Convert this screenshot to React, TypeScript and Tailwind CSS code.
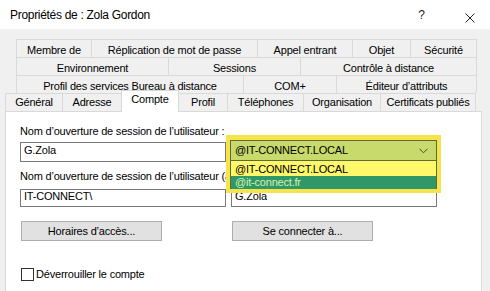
import React from "react";

type T = { label: string; w: string };

const row1: T[] = [
  { label: "Membre de", w: "w-[75px]" },
  { label: "Réplication de mot de passe", w: "w-[166px]" },
  { label: "Appel entrant", w: "w-[95px]" },
  { label: "Objet", w: "w-[58px]" },
  { label: "Sécurité", w: "w-[67px]" },
];
const row2: T[] = [
  { label: "Environnement", w: "w-[152px]" },
  { label: "Sessions", w: "w-[132px]" },
  { label: "Contrôle à distance", w: "w-[177px]" },
];
const row3: T[] = [
  { label: "Profil des services Bureau à distance", w: "w-[227px]" },
  { label: "COM+", w: "w-[93px]" },
  { label: "Éditeur d’attributs", w: "w-[141px]" },
];

function UpperRow({ tabs }: { tabs: T[] }) {
  return (
    <div className="flex pl-[16px]">
      {tabs.map((t, i) => (
        <div
          key={t.label}
          className={`${t.w} h-[18px] border-t border-l border-[#d9d9d9] flex justify-center pt-[4px] leading-[13px] whitespace-nowrap ${
            i === tabs.length - 1 ? "border-r" : ""
          }`}
        >
          {t.label}
        </div>
      ))}
    </div>
  );
}

export default function App() {
  return (
    <div className="w-[490px] h-[291px] overflow-hidden bg-[#f0f0f0] text-[11px] tracking-[-0.2px] text-black font-['Liberation_Sans',Arial,sans-serif]">
      {/* Title bar */}
      <div className="h-[29px] bg-white flex items-start">
        <div className="pl-[10px] pt-[8px] text-[12px] leading-[15px] tracking-[-0.3px]">
          Propriétés de : Zola Gordon
        </div>
        <div className="ml-auto pt-[8px] text-[12px] leading-[15px] w-[7px] text-center text-[#222]">?</div>
        <div className="ml-[40px] mt-[13px] mr-[15px]">
          <svg width="10" height="10" viewBox="0 0 10 10">
            <path d="M0.5 0.5 L9.5 9.5 M9.5 0.5 L0.5 9.5" stroke="#222" strokeWidth="1" fill="none" />
          </svg>
        </div>
      </div>

      {/* Tabs */}
      <div className="pt-[10px]">
        <UpperRow tabs={row1} />
        <UpperRow tabs={row2} />
        <UpperRow tabs={row3} />
        <div className="flex items-end h-[18px] pl-[5px]">
          <div className="w-[57px] h-[18px] border-t border-l border-[#d9d9d9] flex justify-center pt-[2px] leading-[13px]">Général</div>
          <div className="w-[59px] h-[18px] border-t border-l border-[#d9d9d9] flex justify-center pt-[2px] leading-[13px]">Adresse</div>
          <div className="w-[58px] h-[22px] mb-[-1px] relative z-10 bg-white border-t border-x border-[#d9d9d9] flex justify-center pt-[2px] leading-[13px]">Compte</div>
          <div className="w-[48px] h-[18px] border-t border-[#d9d9d9] flex justify-center pt-[2px] leading-[13px]">Profil</div>
          <div className="w-[76px] h-[18px] border-t border-l border-[#d9d9d9] flex justify-center pt-[2px] leading-[13px]">Téléphones</div>
          <div className="w-[77px] h-[18px] border-t border-l border-[#d9d9d9] flex justify-center pt-[2px] leading-[13px]">Organisation</div>
          <div className="w-[96px] h-[18px] border-t border-x border-[#d9d9d9] flex justify-center pt-[2px] leading-[13px] whitespace-nowrap">Certificats publiés</div>
        </div>

        {/* Panel */}
        <div className="ml-[5px] w-[477px] h-[200px] bg-white border border-[#d9d9d9] pt-[13px] pl-[14px]">
          <div className="grid grid-cols-[206px_206px] gap-x-[5px]">
            <div className="col-span-2 leading-[13px] whitespace-nowrap">
              Nom d’ouverture de session de l’utilisateur :
            </div>
            <div className="mt-[4px] h-[20px] border border-[#7a7a7a] pl-[3px] pt-[1px] leading-[13px]">G.Zola</div>
            <div className="mt-[4px] h-[20px] relative z-10">
              {/* opened combo with highlight */}
              <div className="absolute top-[-7px] left-[-5px] w-[215px] bg-[#f6e44a] pt-[5px] pb-[4px] px-[4px]">
                <div className="h-[21px] bg-[#c7da6b] border border-[#5d6b39] flex items-center pl-[4px] pr-[4px] leading-[13px]">
                  <span>@IT-CONNECT.LOCAL</span>
                  <svg className="ml-auto mr-[4px]" width="9" height="6" viewBox="0 0 9 6">
                    <path d="M0.5 0.8 L4.5 4.8 L8.5 0.8" stroke="#3d4a26" strokeWidth="1" fill="none" />
                  </svg>
                </div>
                <div className="border-x border-[#5d6b39]">
                  <div className="h-[15px] bg-[#fff86b] pl-[4px] pt-[2px] leading-[13px]">@IT-CONNECT.LOCAL</div>
                  <div className="h-[13px] bg-[#2f9866] pl-[4px] leading-[13px] text-[#d9f0b4]">@it-connect.fr</div>
                </div>
              </div>
            </div>
            <div className="col-span-2 mt-[8px] w-[210px] overflow-hidden leading-[13px] whitespace-nowrap">
              Nom d’ouverture de session de l’utilisateur (antérieur à Windows 2000) :
            </div>
            <div className="mt-[6px] h-[18px] border border-[#7a7a7a] pl-[3px] leading-[13px]">IT-CONNECT\</div>
            <div className="mt-[6px] h-[18px] border border-[#7a7a7a] pl-[3px] leading-[13px]">G.Zola</div>
          </div>

          <div className="grid grid-cols-[206px_206px] gap-x-[5px] mt-[14px]">
            <button className="ml-[1px] w-[141px] h-[20px] bg-[#e1e1e1] border border-[#adadad] flex items-center justify-center leading-[13px]">
              Horaires d’accès...
            </button>
            <button className="ml-[1px] w-[141px] h-[20px] bg-[#e1e1e1] border border-[#adadad] flex items-center justify-center leading-[13px]">
              Se connecter à...
            </button>
          </div>

          <div className="mt-[27px] ml-[1px] flex items-center">
            <div className="w-[13px] h-[13px] border border-[#333333] bg-white" />
            <span className="ml-[2px] leading-[13px]">Déverrouiller le compte</span>
          </div>
        </div>
      </div>
    </div>
  );
}
